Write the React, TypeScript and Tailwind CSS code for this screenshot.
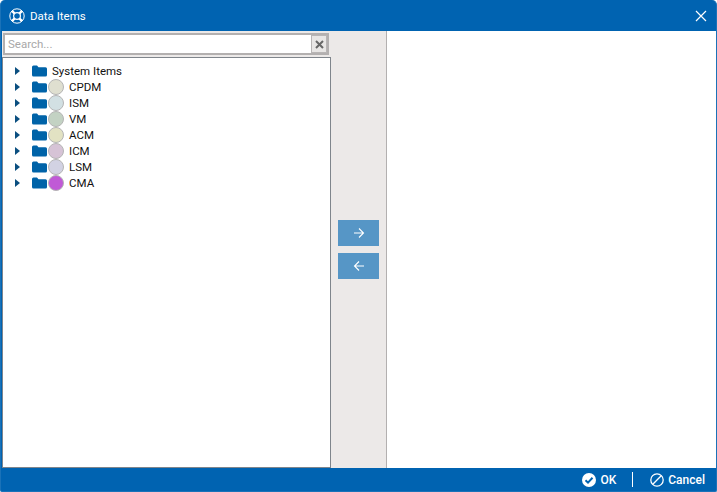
const items = [
  { name: "System Items" },
  { name: "CPDM", color: "#dfdfd0" },
  { name: "ISM", color: "#d2e0e3" },
  { name: "VM", color: "#c3d2c3" },
  { name: "ACM", color: "#e2e2c3" },
  { name: "ICM", color: "#d6c3d6" },
  { name: "LSM", color: "#d2d2e3" },
  { name: "CMA", color: "#c05ad6" },
];

function Folder() {
  return (
    <svg width="15" height="12" viewBox="0 0 15 12" className="shrink-0">
      <path d="M0 2 a1.5 1.5 0 0 1 1.5-1.5 H5 l1.5 1.8 H13.5 a1.5 1.5 0 0 1 1.5 1.5 V10 a1.5 1.5 0 0 1-1.5 1.5 H1.5 A1.5 1.5 0 0 1 0 10 Z" fill="#0063a8" />
    </svg>
  );
}

function Arrow({ left }: { left?: boolean }) {
  return (
    <svg width="12" height="12" viewBox="0 0 12 12" fill="none" stroke="#fff" strokeWidth="1.1">
      {left ? <path d="M11 6H1.5M6 1.5 1.5 6 6 10.5" /> : <path d="M1 6h9.5M6 1.5 10.5 6 6 10.5" />}
    </svg>
  );
}

export default function App() {
  return (
    <div className="w-[717px] h-[492px] flex flex-col bg-[#0063b1] overflow-hidden rounded-t-[5px] rounded-b-[2px] border-x border-b border-[#1a72b8] pl-[1px] font-['Roboto','Noto_Sans',sans-serif] text-[11.5px] leading-[16px]">
      <div className="h-[31px] shrink-0 flex items-center pl-[7px] pr-[9px] text-white">
        <svg width="16" height="16" viewBox="0 0 16 16" fill="none" stroke="#fff" className="shrink-0">
          <circle cx="8" cy="8" r="7.2" strokeWidth="1" />
          <circle cx="8" cy="8" r="3.4" strokeWidth="1.2" />
          <path d="M3.2 3.2 5.7 5.7M12.8 3.2 10.3 5.7M3.2 12.8 5.7 10.3M12.8 12.8 10.3 10.3" strokeWidth="2.4" />
        </svg>
        <span className="ml-[5px]">Data Items</span>
        <svg width="12" height="12" viewBox="0 0 12 12" fill="none" stroke="#fff" strokeWidth="1.2" className="ml-auto">
          <path d="M1 1 11 11M11 1 1 11" />
        </svg>
      </div>

      <div className="flex-1 min-h-0 flex bg-white">
        <div className="w-[329px] shrink-0 flex flex-col bg-[#ece9e8] pt-[2px]">
          <div className="h-[22px] shrink-0 mr-[2px] ml-[1px] border-2 border-[#b3b0b0] bg-white flex items-center justify-between">
            <span className="pl-[3px] text-[#a8a8a8]">Search...</span>
            <div className="w-[16px] h-[18px] bg-[#e8e6e5] border border-[#b8b5b5] flex items-center justify-center">
              <svg width="9" height="9" viewBox="0 0 9 9" fill="none" stroke="#666" strokeWidth="2">
                <path d="M1 1 8 8M8 1 1 8" />
              </svg>
            </div>
          </div>
          <div className="flex-1 min-h-0 mt-[2px] bg-white border border-[#7f858c] pt-[5px] pl-[12px]">
            {items.map((item) => (
              <div key={item.name} className="h-[16px] flex items-center">
                <svg width="5" height="8" viewBox="0 0 5 8" className="shrink-0">
                  <path d="M0 0 5 4 0 8Z" fill="#0b4f80" />
                </svg>
                <div className="ml-[12px]">
                  <Folder />
                </div>
                {item.color ? (
                  <span
                    className="ml-px w-[16px] h-[16px] shrink-0 rounded-full border border-[#b5b5b5]"
                    style={{ backgroundColor: item.color }}
                  />
                ) : (
                  <span className="w-[5px] shrink-0" />
                )}
                <span className={item.color ? "ml-[5px] text-[#111]" : "text-[#111]"}>{item.name}</span>
              </div>
            ))}
          </div>
        </div>

        <div className="w-[56px] shrink-0 bg-[#ece9e8] border-r border-[#b3b0b0] flex flex-col items-center justify-center gap-[7px]">
          <button className="w-[41px] h-[26px] bg-[#5696c6] flex items-center justify-center">
            <Arrow />
          </button>
          <button className="w-[41px] h-[26px] bg-[#5696c6] flex items-center justify-center">
            <Arrow left />
          </button>
        </div>

        <div className="flex-1 bg-white" />
      </div>

      <div className="h-[23px] shrink-0 flex items-center justify-end pr-[11px] text-[12px] text-white font-medium">
        <div className="flex items-center gap-[4px]">
          <svg width="14" height="14" viewBox="0 0 14 14">
            <circle cx="7" cy="7" r="7" fill="#fff" />
            <path d="M3.5 7.2 6 9.6 10.5 4.8" fill="none" stroke="#0063b1" strokeWidth="2" />
          </svg>
          <span>OK</span>
        </div>
        <div className="w-px h-[15px] bg-white ml-[16px] mr-[17px]" />
        <div className="flex items-center gap-[4px]">
          <svg width="14" height="14" viewBox="0 0 14 14" fill="none" stroke="#fff" strokeWidth="1.3">
            <circle cx="7" cy="7" r="6.2" />
            <path d="M2.8 11.2 11.2 2.8" />
          </svg>
          <span>Cancel</span>
        </div>
      </div>
    </div>
  );
}
